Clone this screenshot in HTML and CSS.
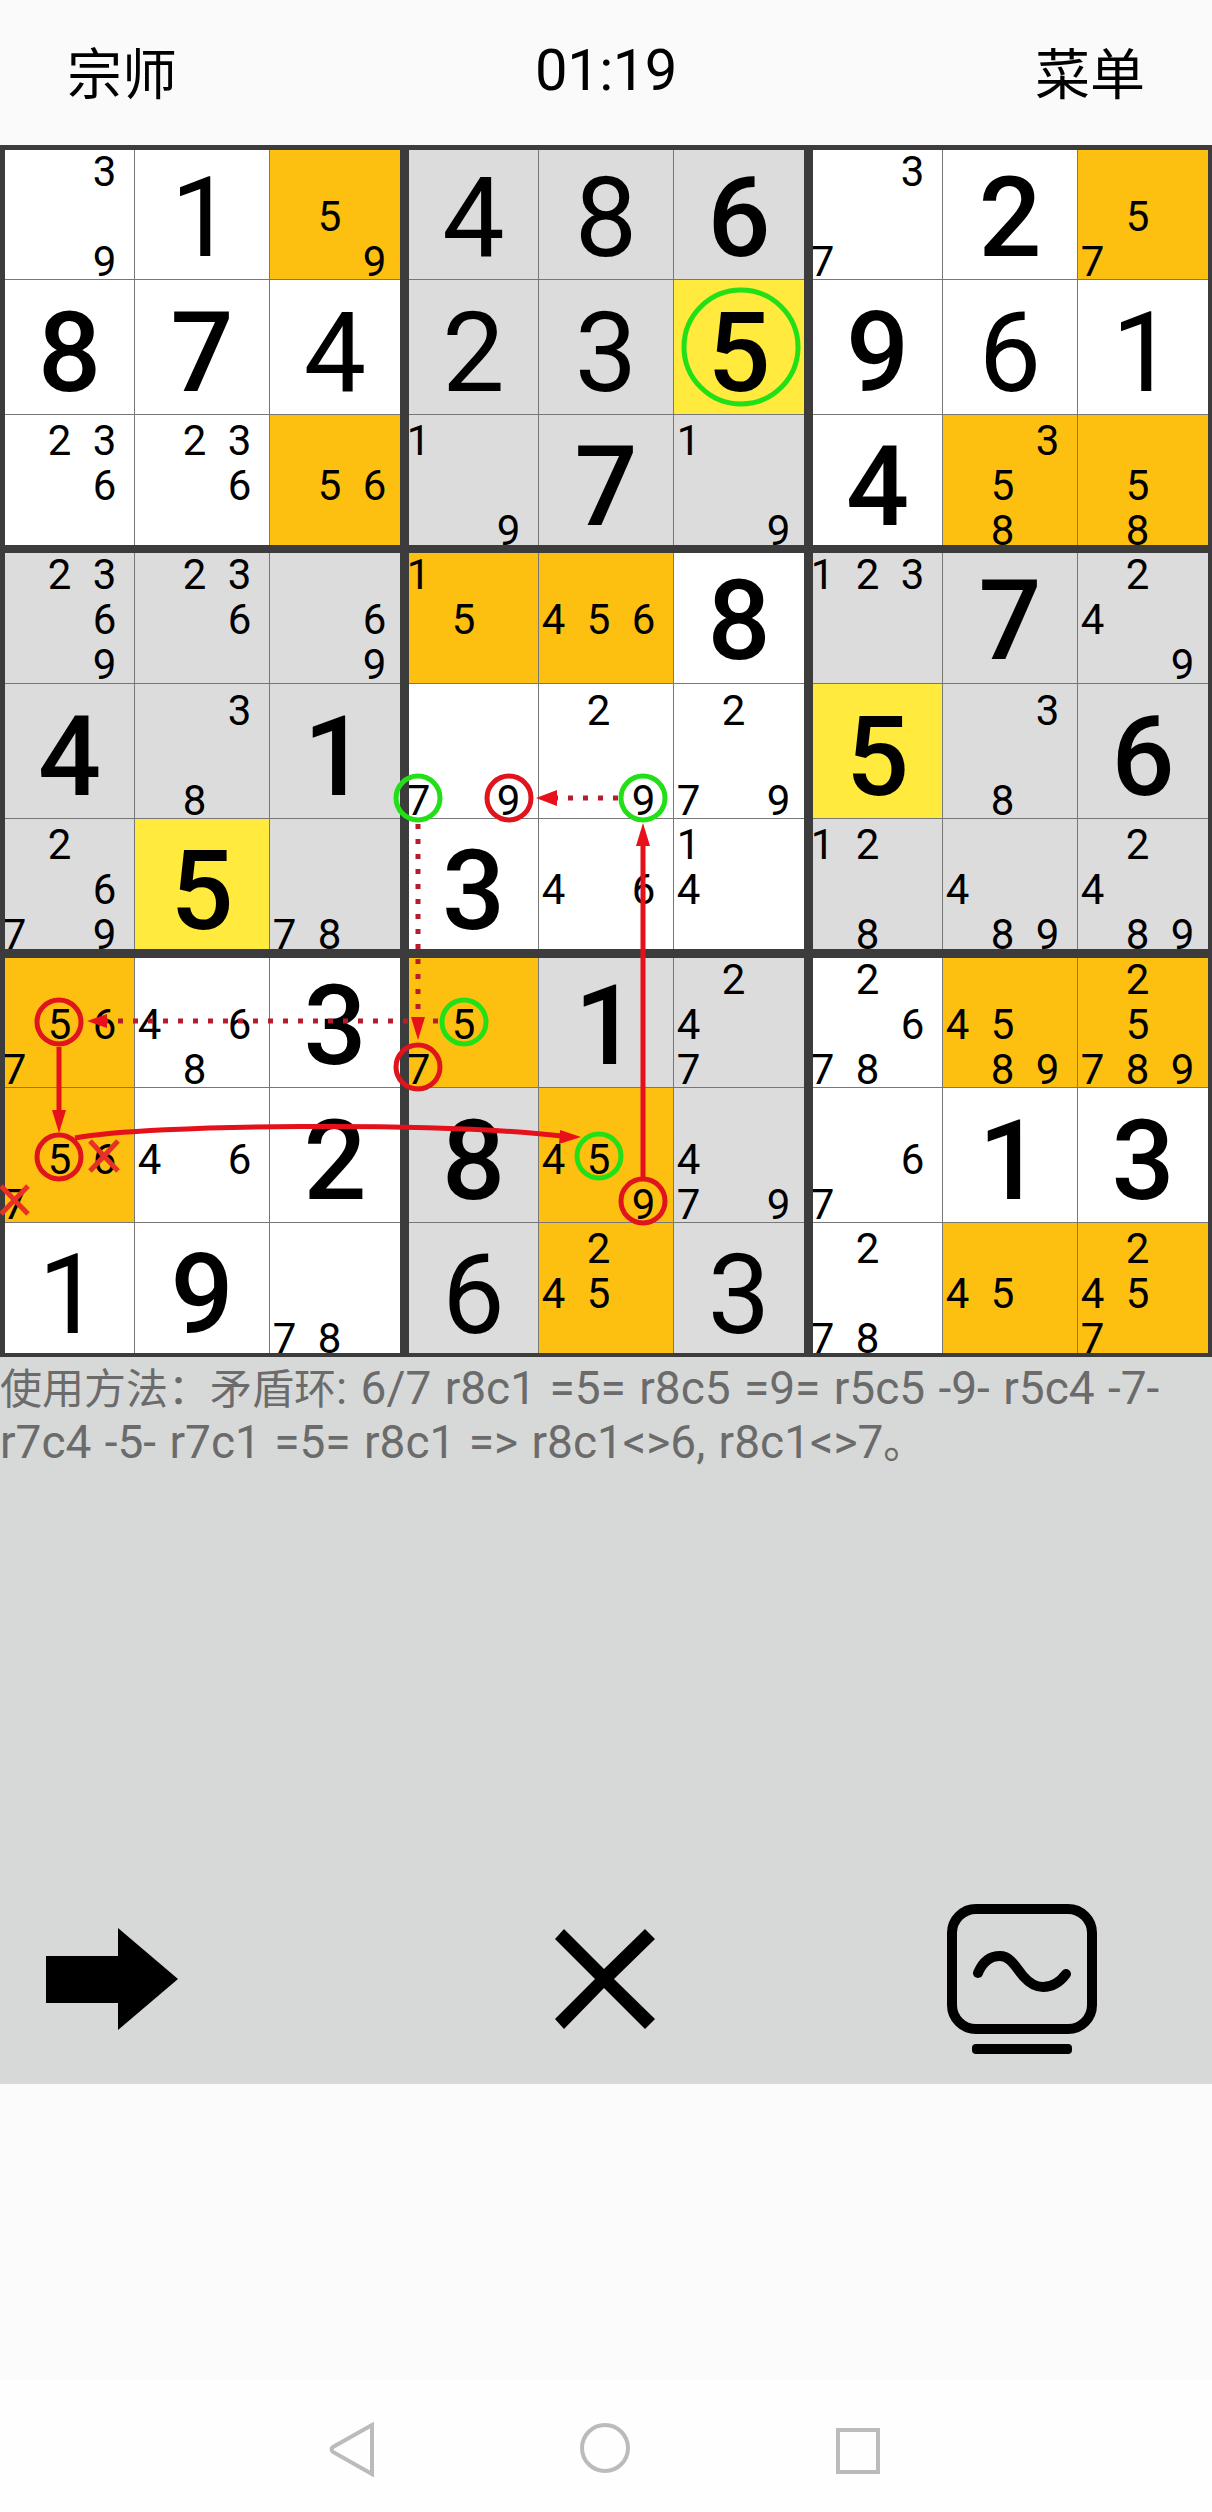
FILE: index.html
```html
<!DOCTYPE html>
<html lang="zh">
<head>
  <meta charset="UTF-8">
  <meta name="viewport" content="width=device-width, initial-scale=1.0">
  <title>数独</title>
  <link rel="stylesheet" href="styles.css">
</head>
<body>
  <header class="topbar">
    <span class="level">宗师</span>
    <span class="clock">01:19</span>
    <span class="menu">菜单</span>
  </header>

  <main class="board">
    <div class="block">
      <div class="cell"><span class="d3">3</span><span class="d9">9</span></div>
      <div class="cell given">1</div>
      <div class="cell orange"><span class="d5">5</span><span class="d9">9</span></div>
      <div class="cell given bold">8</div>
      <div class="cell given bold">7</div>
      <div class="cell given">4</div>
      <div class="cell"><span class="d2">2</span><span class="d3">3</span><span class="d6">6</span></div>
      <div class="cell"><span class="d2">2</span><span class="d3">3</span><span class="d6">6</span></div>
      <div class="cell orange"><span class="d5">5</span><span class="d6">6</span></div>
    </div>
    <div class="block">
      <div class="cell grey given">4</div>
      <div class="cell grey given">8</div>
      <div class="cell grey given bold">6</div>
      <div class="cell grey given">2</div>
      <div class="cell grey given">3</div>
      <div class="cell yellow given bold">5</div>
      <div class="cell grey"><span class="d1">1</span><span class="d9">9</span></div>
      <div class="cell grey given bold">7</div>
      <div class="cell grey"><span class="d1">1</span><span class="d9">9</span></div>
    </div>
    <div class="block">
      <div class="cell"><span class="d3">3</span><span class="d7">7</span></div>
      <div class="cell given bold">2</div>
      <div class="cell orange"><span class="d5">5</span><span class="d7">7</span></div>
      <div class="cell given bold">9</div>
      <div class="cell given">6</div>
      <div class="cell given">1</div>
      <div class="cell given bold">4</div>
      <div class="cell orange"><span class="d3">3</span><span class="d5">5</span><span class="d8">8</span></div>
      <div class="cell orange"><span class="d5">5</span><span class="d8">8</span></div>
    </div>

    <div class="block mid">
      <div class="cell grey"><span class="d2">2</span><span class="d3">3</span><span class="d6">6</span><span class="d9">9</span></div>
      <div class="cell grey"><span class="d2">2</span><span class="d3">3</span><span class="d6">6</span></div>
      <div class="cell grey"><span class="d6">6</span><span class="d9">9</span></div>
      <div class="cell grey given bold">4</div>
      <div class="cell grey"><span class="d3">3</span><span class="d8">8</span></div>
      <div class="cell grey given bold">1</div>
      <div class="cell grey"><span class="d2">2</span><span class="d6">6</span><span class="d7">7</span><span class="d9">9</span></div>
      <div class="cell yellow given bold">5</div>
      <div class="cell grey"><span class="d7">7</span><span class="d8">8</span></div>
    </div>
    <div class="block mid">
      <div class="cell orange"><span class="d1">1</span><span class="d5">5</span></div>
      <div class="cell orange"><span class="d4">4</span><span class="d5">5</span><span class="d6">6</span></div>
      <div class="cell given bold">8</div>
      <div class="cell"><span class="d7">7</span><span class="d9">9</span></div>
      <div class="cell"><span class="d2">2</span><span class="d9">9</span></div>
      <div class="cell"><span class="d2">2</span><span class="d7">7</span><span class="d9">9</span></div>
      <div class="cell given bold">3</div>
      <div class="cell"><span class="d4">4</span><span class="d6">6</span></div>
      <div class="cell"><span class="d1">1</span><span class="d4">4</span></div>
    </div>
    <div class="block mid">
      <div class="cell grey"><span class="d1">1</span><span class="d2">2</span><span class="d3">3</span></div>
      <div class="cell grey given bold">7</div>
      <div class="cell grey"><span class="d2">2</span><span class="d4">4</span><span class="d9">9</span></div>
      <div class="cell yellow given bold">5</div>
      <div class="cell grey"><span class="d3">3</span><span class="d8">8</span></div>
      <div class="cell grey given bold">6</div>
      <div class="cell grey"><span class="d1">1</span><span class="d2">2</span><span class="d8">8</span></div>
      <div class="cell grey"><span class="d4">4</span><span class="d8">8</span><span class="d9">9</span></div>
      <div class="cell grey"><span class="d2">2</span><span class="d4">4</span><span class="d8">8</span><span class="d9">9</span></div>
    </div>

    <div class="block low">
      <div class="cell orange"><span class="d5">5</span><span class="d6">6</span><span class="d7">7</span></div>
      <div class="cell"><span class="d4">4</span><span class="d6">6</span><span class="d8">8</span></div>
      <div class="cell given bold">3</div>
      <div class="cell orange"><span class="d5">5</span><span class="d6">6</span><span class="d7">7</span></div>
      <div class="cell"><span class="d4">4</span><span class="d6">6</span></div>
      <div class="cell given bold">2</div>
      <div class="cell given">1</div>
      <div class="cell given bold">9</div>
      <div class="cell"><span class="d7">7</span><span class="d8">8</span></div>
    </div>
    <div class="block low">
      <div class="cell orange"><span class="d5">5</span><span class="d7">7</span></div>
      <div class="cell grey given bold">1</div>
      <div class="cell grey"><span class="d2">2</span><span class="d4">4</span><span class="d7">7</span></div>
      <div class="cell grey given bold">8</div>
      <div class="cell orange"><span class="d4">4</span><span class="d5">5</span><span class="d9">9</span></div>
      <div class="cell grey"><span class="d4">4</span><span class="d7">7</span><span class="d9">9</span></div>
      <div class="cell grey given">6</div>
      <div class="cell orange"><span class="d2">2</span><span class="d4">4</span><span class="d5">5</span></div>
      <div class="cell grey given">3</div>
    </div>
    <div class="block low">
      <div class="cell"><span class="d2">2</span><span class="d6">6</span><span class="d7">7</span><span class="d8">8</span></div>
      <div class="cell orange"><span class="d4">4</span><span class="d5">5</span><span class="d8">8</span><span class="d9">9</span></div>
      <div class="cell orange"><span class="d2">2</span><span class="d5">5</span><span class="d7">7</span><span class="d8">8</span><span class="d9">9</span></div>
      <div class="cell"><span class="d6">6</span><span class="d7">7</span></div>
      <div class="cell given bold">1</div>
      <div class="cell given bold">3</div>
      <div class="cell"><span class="d2">2</span><span class="d7">7</span><span class="d8">8</span></div>
      <div class="cell orange"><span class="d4">4</span><span class="d5">5</span></div>
      <div class="cell orange"><span class="d2">2</span><span class="d4">4</span><span class="d5">5</span><span class="d7">7</span></div>
    </div>

    <!-- chain drawn over the board, coordinates are page pixels -->
    <svg class="chain" viewBox="0 145 1212 1212" width="1212" height="1212">
      <g class="dotted">
        <path d="M618 798H556"/>
        <path d="M418 824V1018"/>
        <path d="M438 1021H106"/>
      </g>
      <g class="solid">
        <path d="M59 1047V1112"/>
        <path d="M75 1138C150 1124 440 1122 562 1136"/>
        <path d="M643 1177V844"/>
      </g>
      <g class="heads">
        <polygon points="536,798 557,790 557,806"/>
        <polygon points="418,1040 411,1017 425,1017"/>
        <polygon points="87,1021 107,1014 107,1028"/>
        <polygon points="59,1133 52,1110 66,1110"/>
        <polygon points="581,1137 560,1130 559,1144"/>
        <polygon points="643,823 636,846 650,846"/>
      </g>
      <g class="ring-green">
        <circle cx="741" cy="347" r="57"/>
        <circle cx="418" cy="798" r="22"/>
        <circle cx="643" cy="798" r="22"/>
        <circle cx="464" cy="1022" r="22"/>
        <circle cx="599" cy="1156" r="22"/>
      </g>
      <g class="ring-red">
        <circle cx="509" cy="798" r="22"/>
        <circle cx="59" cy="1022" r="22"/>
        <circle cx="418" cy="1067" r="22"/>
        <circle cx="59" cy="1157" r="22"/>
        <circle cx="643" cy="1201" r="22"/>
      </g>
      <g class="cross">
        <path d="M90 1141L118 1171M118 1141L90 1171"/>
        <path d="M1 1186L28 1214M28 1186L1 1214"/>
      </g>
    </svg>
  </main>

  <section class="panel">
    <p class="hint">使用方法：矛盾环<span class="latin">: 6/7 r8c1 =5= r8c5 =9= r5c5 -9- r5c4 -7- r7c4 -5- r7c1 =5= r8c1 =&gt; r8c1&lt;&gt;6, r8c1&lt;&gt;7</span>。</p>
    <div class="tools">
      <svg class="tool" viewBox="0 0 1212 150" width="1212" height="150">
        <polygon points="46,52 118,52 118,24 178,75 118,126 118,99 46,99"/>
        <polygon points="564,25 604,65 645,25 655,35 614,75 655,115 645,125 604,84 564,125 555,115 595,75 555,35"/>
        <rect class="screen" x="952" y="5" width="140" height="120" rx="24"/>
        <path class="wave" d="M978 69C983 57 990 52 1000 52C1010 52 1015 62 1023 72C1030 80 1036 83 1043 83C1053 83 1060 78 1066 70"/>
        <rect x="972" y="140" width="100" height="10" rx="4"/>
      </svg>
    </div>
  </section>

  <nav class="navbar">
    <svg viewBox="0 0 1212 70" width="1212" height="70">
      <path d="M372 3L333 25Q330 27 333 30L372 52Z"/>
      <circle cx="605" cy="26" r="23"/>
      <rect x="838" y="8" width="40" height="42"/>
    </svg>
  </nav>
</body>
</html>
```

FILE: styles.css
```css
* {
  box-sizing: border-box;
}
body {
  margin: 0;
  width: 1212px;
  height: 2512px;
  background-color: #fafbfa;
  color: #000;
  font-family: Roboto, "Noto Sans CJK SC", sans-serif;
}

/* top bar */
.topbar {
  height: 145px;
  padding: 0 67px 6px;
  display: flex;
  justify-content: space-between;
  align-items: center;
  background-color: #fafafa;
  font-size: 55px;
}
.clock {
  font-size: 58px;
  letter-spacing: -0.5px;
}

/* board */
.board {
  position: relative;
  height: 1212px;
  padding: 5px 4px 4px 5px;
  display: grid;
  grid-template-columns: repeat(3, 395px);
  grid-template-rows: 395px 396px 395px;
  column-gap: 9px;
  row-gap: 8px;
  background-color: #3c3c3c;
}
.block {
  display: grid;
  grid-template-columns: 129px 134px 130px;
  grid-template-rows: 129px 134px 130px;
  gap: 1px;
  background-color: #777;
}
.block.mid {
  grid-template-rows: 130px 134px 130px;
}
.block.low {
  margin-top: 1px;
  margin-bottom: -1px;
}
.cell {
  overflow: hidden;
  display: grid;
  grid-template-columns: repeat(3, 45px);
  grid-template-rows: repeat(3, 45px);
  justify-items: center;
  align-items: center;
  align-content: start;
  background-color: #fff;
  font-size: 42px;
  line-height: 45px;
}
.grey {
  background-color: #dddcdd;
}
.orange {
  background-color: #fdc010;
}
.yellow {
  background-color: #ffea3d;
}
.given {
  overflow: visible;
  display: flex;
  justify-content: center;
  align-items: center;
  font-size: 111px;
  line-height: 1;
}
.given.bold {
  font-weight: 500;
}

/* candidate digits sit on a 3x3 inside the cell */
.d1 { grid-area: 1 / 1; }
.d2 { grid-area: 1 / 2; }
.d3 { grid-area: 1 / 3; }
.d4 { grid-area: 2 / 1; }
.d5 { grid-area: 2 / 2; }
.d6 { grid-area: 2 / 3; }
.d7 { grid-area: 3 / 1; }
.d8 { grid-area: 3 / 2; }
.d9 { grid-area: 3 / 3; }

.cell span {
  position: relative;
  left: -8px;
}
.cell:nth-child(3n+1) span {
  left: -13px;
}

/* the rows of a block are not quite the same height */
.cell:nth-child(-n+3) span {
  top: -1px;
}
.cell:nth-child(n+4):nth-child(-n+6) {
  padding-top: 4px;
}
.cell:nth-child(n+7) {
  padding-top: 3px;
}
.given:nth-child(-n+3) {
  padding-top: 7px;
}
.given:nth-child(n+4):nth-child(-n+6) {
  padding-top: 12px;
}
.given:nth-child(n+7) {
  padding-top: 14px;
}

/* chain overlay */
.chain {
  position: absolute;
  top: 0;
  left: 0;
  fill: none;
}
.dotted path {
  stroke: #b71c2c;
  stroke-width: 5;
  stroke-dasharray: 5 10;
}
.solid path {
  stroke: #e4101a;
  stroke-width: 5;
}
.heads polygon {
  fill: #e8101a;
}
.ring-green circle {
  stroke: #22e018;
  stroke-width: 5;
}
.ring-red circle {
  stroke: #e0141c;
  stroke-width: 5;
}
.cross path {
  stroke: #e83024;
  stroke-width: 5;
}

/* explanation and tools */
.panel {
  height: 727px;
  display: flex;
  flex-direction: column;
  justify-content: space-between;
  background-color: #d7d9d8;
}
.hint {
  margin: 0;
  padding-top: 5px;
  color: #6b6b6b;
  font-size: 42px;
  line-height: 52px;
}
.latin {
  font-size: 46px;
  word-spacing: 2px;
}
.tools {
  height: 180px;
}
.tool .screen {
  fill: none;
  stroke: #000;
  stroke-width: 10;
}
.tool .wave {
  fill: none;
  stroke: #000;
  stroke-width: 10;
  stroke-linecap: round;
}

.navbar {
  height: 132px;
  margin-top: 296px;
  padding-top: 42px;
  background-color: #fefefe;
}
.navbar svg {
  fill: none;
  stroke: #bbb;
  stroke-width: 4;
}
```
